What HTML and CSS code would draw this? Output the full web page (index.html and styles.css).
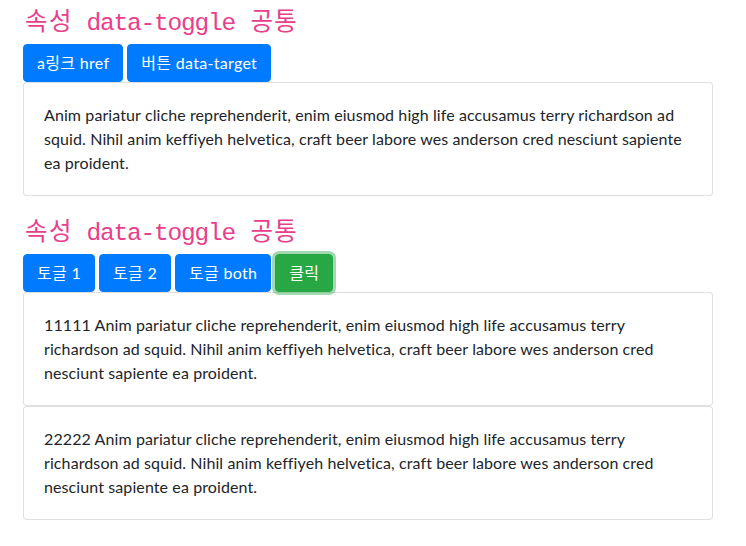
FILE: index.html
```html
<!DOCTYPE html>
<html>
<head>
  <meta charset="UTF-8">
  <title>data-toggle 공통</title>
  <link rel="stylesheet" href="styles.css">
</head>
<body>
  <div class="container">
    <div class="section">
      <h3><code><span class="ko">속성</span> data-toggle <span class="ko">공통</span></code></h3>
      <div class="btn-row">
        <a class="btn btn-primary" href="#demo1">a링크 href</a>
        <button class="btn btn-primary">버튼 data-target</button>
      </div>
      <div class="card">
        <div class="card-body">
          Anim pariatur cliche reprehenderit, enim eiusmod high life accusamus terry richardson ad squid. Nihil anim keffiyeh helvetica, craft beer labore wes anderson cred nesciunt sapiente ea proident.
        </div>
      </div>
    </div>

    <div class="section">
      <h3><code><span class="ko">속성</span> data-toggle <span class="ko">공통</span></code></h3>
      <div class="btn-row">
        <button class="btn btn-primary">토글 1</button>
        <button class="btn btn-primary">토글 2</button>
        <button class="btn btn-primary">토글 both</button>
        <button class="btn btn-success focus">클릭</button>
      </div>
      <div class="card">
        <div class="card-body">
          11111 Anim pariatur cliche reprehenderit, enim eiusmod high life accusamus terry richardson ad squid. Nihil anim keffiyeh helvetica, craft beer labore wes anderson cred nesciunt sapiente ea proident.
        </div>
      </div>
      <div class="card">
        <div class="card-body">
          22222 Anim pariatur cliche reprehenderit, enim eiusmod high life accusamus terry richardson ad squid. Nihil anim keffiyeh helvetica, craft beer labore wes anderson cred nesciunt sapiente ea proident.
        </div>
      </div>
    </div>
  </div>
</body>
</html>
```

FILE: styles.css
```css
body {
  margin: 0;
  font-family: Lato, "Noto Sans CJK KR", sans-serif;
  font-size: 16px;
  line-height: 24px;
  color: #212529;
  background: #fff;
}
.container {
  width: 690px;
  margin-left: 23px;
  padding-top: 2px;
}
.section + .section {
  margin-top: 16px;
}
h3 {
  margin: 0 0 8px;
  padding-top: 10px;
  font-family: "Liberation Mono", "Noto Sans CJK KR", monospace;
  font-size: 24.5px;
  line-height: 24px;
  font-weight: normal;
  letter-spacing: -1.2px;
}
code {
  display: block;
  font-family: inherit;
  color: #e83e8c;
}
.ko {
  letter-spacing: 1.4px;
  margin-left: 2px;
}
.btn-row {
  display: flex;
  gap: 4px;
}
.btn {
  display: inline-block;
  padding: 6px 13px;
  font-family: inherit;
  font-size: 16px;
  line-height: 24px;
  letter-spacing: 0.3px;
  color: #fff;
  border: 1px solid transparent;
  border-radius: 4px;
  text-decoration: none;
  cursor: pointer;
}
.btn-primary {
  background: #007bff;
  border-color: #007bff;
}
.btn-success {
  background: #28a745;
  border-color: #28a745;
}
.btn-success.focus {
  box-shadow: 0 0 0 3px rgba(72, 180, 97, 0.5);
}
.card {
  border: 1px solid rgba(0, 0, 0, 0.125);
  border-radius: 4px;
  background: #fff;
}
.card-body {
  padding: 20px;
  letter-spacing: 0.1px;
}
```
